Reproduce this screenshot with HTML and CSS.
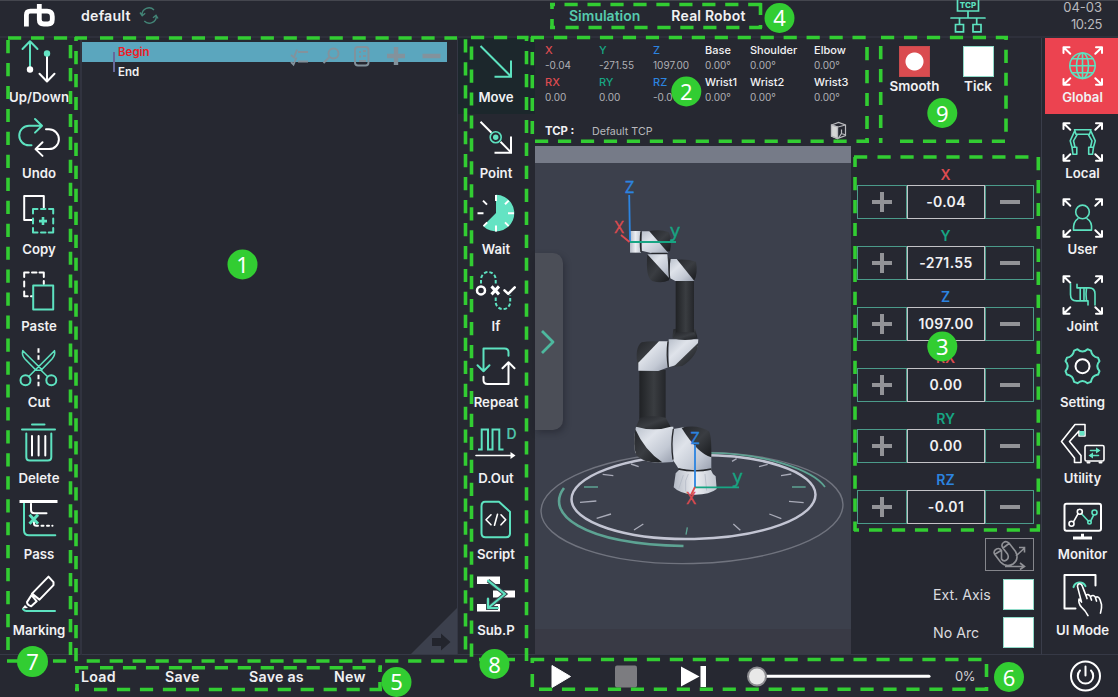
FILE: index.html
```html
<!DOCTYPE html>
<html lang="en">
<head>
<meta charset="utf-8">
<title>Robot teaching</title>
<link rel="stylesheet" href="styles.css">
</head>
<body>
<svg class="defs" aria-hidden="true">
  <defs>
    <symbol id="corners" viewBox="0 0 50 50">
      <path class="w" d="M6.5 15V9.3h6M6.8 9.5l6.5 6.2M39 9.3h6V15M44.8 9.5l-6.5 6.2M6.5 41v5.7h6M6.8 46.5l6.5-6.2M39 46.7h6V41M44.8 46.5l-6.5-6.2"/>
    </symbol>
    <linearGradient id="steel" x1="0" y1="0" x2="1" y2="1">
      <stop offset="0" stop-color="#b9c0cb"/><stop offset=".35" stop-color="#dfe3ea"/><stop offset=".7" stop-color="#c3c9d4"/><stop offset="1" stop-color="#989fae"/>
    </linearGradient>
    <linearGradient id="base" x1="0" y1="0" x2="1" y2="0">
      <stop offset="0" stop-color="#b4bac5"/><stop offset=".5" stop-color="#eceef2"/><stop offset="1" stop-color="#c0c6d0"/>
    </linearGradient>
    <linearGradient id="tube" x1="0" y1="0" x2="1" y2="0">
      <stop offset="0" stop-color="#202225"/><stop offset=".55" stop-color="#3a3d41"/><stop offset="1" stop-color="#24262a"/>
    </linearGradient>
    <linearGradient id="cap" x1="0" y1="0" x2="1" y2="1">
      <stop offset="0" stop-color="#24262a"/><stop offset=".5" stop-color="#3a3d42"/><stop offset="1" stop-color="#191b1e"/>
    </linearGradient>
  </defs>
</svg>

<div class="app">
  <header class="topbar">
    <svg class="logo" viewBox="22 2 36 28"><path d="M26.4 26.5V15q0-3.8 4-3.8H47q5.3 0 5.3 5.3v3q0 4.5-4.5 4.5h-4q-4.5 0-4.5-4.5V4"/></svg>
    <span class="project">default</span>
    <svg class="refresh" viewBox="139 5 20 20"><path d="M142 15a7 7 0 0 1 12-5M156.300 16a7 7 0 0 1-12 5M140 12.500l2.200 3.200 3-2.500M158 18.500l-2-3.200-3 2.400"/></svg>
    <nav class="modes"><span class="active">Simulation</span><span class="real">Real Robot</span></nav>
    <svg class="net" viewBox="948 0 40 34">
      <path class="t" d="M957.500-2V11H978.500V-2M968 11v7M951 18h34M959.500 18v6M976.700 18v6M955.500 24.500h8v7.300h-8zM973 24.500h8v7.300h-8z"/>
      <text x="968" y="8">TCP</text>
    </svg>
    <div class="clock"><span>04-03</span><span class="time">10:25</span></div>
  </header>

  <main class="work">
    <aside class="rail edit">
      <div class="tool"><svg viewBox="14 38 50 50"><path class="t" d="M30 68V41.500M22.500 49l7.500-7.800 7.500 7.800"/><circle class="wf" cx="30" cy="69.500" r="3.200"/><path class="w" d="M47 55v26M39.500 73.800l7.500 7.700 7.500-7.700"/><circle class="tf" cx="47" cy="53.500" r="3.200"/></svg><span class="wide">Up/Down</span></div>
      <div class="tool"><svg viewBox="14 114.200 50 50"><path class="t" d="M31.500 145.500H29a9.700 9.700 0 0 1 0-19.500h12.500M35 119.200l7 6.800-7 6.800"/><path class="w" d="M46 129.500h3a9.900 9.900 0 0 1 0 19.800H36M42.500 142.500l-7 6.800 7 6.800"/></svg><span>Undo</span></div>
      <div class="tool"><svg viewBox="14 190.400 50 50"><path class="w" d="M43.800 208v-11.700H24.200v24h9"/><path class="t" d="M33 214v-4.500h4.500M41 209.500h4.500M49 209.500h4.200v4.500M53.200 219v5M53.200 228.500v4.500h-4.500M45.500 233H41M37.500 233H33v-4.500M33 224v-5"/><path class="t thick butt" d="M43 217.500v8M39 221.500h8"/></svg><span>Copy</span></div>
      <div class="tool"><svg viewBox="14 266.600 50 50"><path class="w" d="M24.200 276.500v-4.300h4.500M32 272.200h4.500M39.500 272.200h4.300v4.300M43.800 280.500v3M24.200 281v5M24.200 291v4.800h3.500M31 295.800h2"/><path class="t" d="M33.200 285h20v24.200h-20z"/></svg><span>Paste</span></div>
      <div class="tool"><svg viewBox="14 342.800 50 50"><path class="w butt" stroke-dasharray="4.500 2.500" d="M38.500 348v12M38.500 374.500v12"/><path class="t thin" d="M22.800 350.500 42 369.500M22.800 350.500q-1.300 4.500 2.200 8.300L36 370h5l6.700 6.500M54.500 350.500 35 370l-6.500 6.500M54.500 350.500q1 4.500-2.500 8.300L41 370"/><circle class="t" cx="25.500" cy="380" r="5"/><circle class="t" cx="51.300" cy="380" r="5"/></svg><span>Cut</span></div>
      <div class="tool"><svg viewBox="14 419 50 50"><path class="t" d="M22 429.500h33M32 424.500h12.500M26.300 433.500V457q0 3.500 3.500 3.500h18q3.500 0 3.500-3.500v-23.500"/><path class="w" d="M32 436v19.500M38.600 436v19.500M45.300 436v19.500"/></svg><span>Delete</span></div>
      <div class="tool"><svg viewBox="14 495.200 50 50"><path class="t" d="M24 503v27.500q0 5 5 5h26.300"/><path class="w" d="M31 504v6q0 3.500 3.500 3.500h12M34 522v2q0 2 2.500 2h1.500M41.500 526h2M47 526h2M52.300 526h.2"/><path class="w heavy" d="M19.500 501.700h38"/><path class="t heavy" d="M29.500 515l8.500 9M38 515l-8.500 9"/></svg><span>Pass</span></div>
      <div class="tool"><svg viewBox="14 571.400 50 50"><path class="t" d="M23 609.500q1.500 2 3.500 2H55"/><path class="w" d="M32 594l16.500-17 5 5.500v3L39.500 600zM31.500 595.500l-4.500 7q0 3 4.200 4.200l5.500-5z"/><path class="wf" d="M22 608.800l3-3.500 3 3z"/></svg><span>Marking</span></div>
    </aside>

    <section class="program">
      <div class="line selected">
        <span>Begin</span>
        <svg viewBox="306 42 141 24">
          <path d="M291 55l3 2.500 3-8M298 52h10M291 62l2.500 2.500 3-7M298 61.500h10"/>
          <circle cx="333.500" cy="53.500" r="5"/><path d="M329.500 57l-6 6"/>
          <rect x="355" y="47" width="13.500" height="18.500" rx="3"/><path d="M359 52h2M363 51h3M359 56.500h2M363 56h3M359 61h7"/>
          <path class="bold" d="M387 56h18M396 47v18M422.500 56h18"/>
        </svg>
      </div>
      <div class="line"><span>End</span></div>
      <i class="branch"></i>
      <svg class="fold" viewBox="411 608 46 46"><path class="page" d="M457 608v46h-46z"/><path class="arrow" d="M432 638h9v-4.500l9.500 8.500-9.500 8.500V646h-9z"/></svg>
    </section>

    <aside class="rail commands">
      <div class="tool current"><svg viewBox="471 38 50 50"><path class="t butt" d="M480.500 46l30 30M511 60.500v16.300h-16.500"/></svg><span>Move</span></div>
      <div class="tool"><svg viewBox="471 114.200 50 50"><path class="w butt" d="M480.500 122l11 11M500.500 142l10 10M511 136.700V153h-16.500"/><circle class="t thin" cx="495.700" cy="137.500" r="5.500"/><circle class="tf" cx="495.700" cy="137.500" r="2.700"/></svg><span>Point</span></div>
      <div class="tool"><svg viewBox="471 190.400 50 50"><path class="tf" d="M496 213.500v-18.300a18.300 18.300 0 1 1-13 31.200z"/><path class="w butt" d="M496 195.500v6M508.700 201l-3.700 3.700M514 213.700h-6M508.700 226.500l-3.700-3.700M496 232v-6M483.500 226.500l3.700-3.700M477.500 213.700h6M483 201l4 4"/></svg><span>Wait</span></div>
      <div class="tool"><svg viewBox="471 266.600 50 50"><path class="t butt" stroke-dasharray="3.500 2" d="M481 283v-4a7.300 7.300 0 0 1 14.700 0v4M495.700 297v4.500a7.200 7.200 0 0 0 14.500 0V295"/><circle class="w ring" cx="481" cy="290" r="4"/><path class="w heavy" d="M491.500 286l7.500 8M499 286l-7.500 8"/><path class="w ring" d="M504.500 290l3.700 3.500 6.500-6.500"/></svg><span>If</span></div>
      <div class="tool"><svg viewBox="471 342.800 50 50"><path class="t" d="M508.500 355.500V352q0-3.700-4-3.700h-21V371M477.500 365l6 6 6-6"/><path class="w" d="M483.500 376.500v3.500q0 3.700 4 3.700h21V362M502.500 368l6-6 6 6"/></svg><span>Repeat</span></div>
      <div class="tool"><svg viewBox="471 419 50 50"><path class="t butt" d="M478 449.500h3.700V429.500h6.300v20h4.500v-20h6.800v20h4.200"/><path class="w thin" d="M476 455.500h35"/><path class="wf" d="M510.500 452l5 3.500-5 3.500z"/><text x="511.500" y="438.500">D</text></svg><span>D.Out</span></div>
      <div class="tool"><svg viewBox="471 495.200 50 50"><path class="t" d="M485 502h14l11 10v21.500q0 4-4 4h-20.500q-4 0-4-4v-27q0-4.500 3.500-4.500z"/><path class="w thin" d="M491 515l-5 5 5 5M501 515l4.700 5-4.700 5M497.500 514.500l-3 11"/></svg><span>Script</span></div>
      <div class="tool"><svg viewBox="471 571.400 50 50"><path class="wf" d="M477 577h23v7.500h-23zM493 591h22v7h-22zM477 604.500h23v7.500h-23z"/><path class="shade" d="M488 581l17 13.500-17 14M488 599v9.500h10"/><path class="t" d="M488 581l17 13.500-17 14M488 599v9.500h10"/></svg><span>Sub.P</span></div>
    </aside>

    <section class="stage">
      <div class="band">
        <div class="pose">
          <div class="grid">
            <b class="x">X</b><b class="y">Y</b><b class="z">Z</b><b>Base</b><b>Shoulder</b><b>Elbow</b>
            <span>-0.04</span><span>-271.55</span><span>1097.00</span><span>0.00°</span><span>0.00°</span><span>0.00°</span>
            <b class="x">RX</b><b class="y">RY</b><b class="z">RZ</b><b>Wrist1</b><b>Wrist2</b><b>Wrist3</b>
            <span>0.00</span><span>0.00</span><span>-0.01</span><span>0.00°</span><span>0.00°</span><span>0.00°</span>
          </div>
          <div class="tcp"><strong>TCP :</strong><span>Default TCP</span>
            <svg viewBox="830 121 18 19"><path class="side" d="M831.500 125l6 2v11.500l-6-2.500z"/><path d="M831.500 125l7-2.500 7 2.500v10.500l-8 3-6-2.500zM831.500 125l6.500 2 7.500-2M837.500 127v11.500M838.500 138l3-4.500 4 1.500M841.500 133.500v-4"/></svg>
          </div>
        </div>
        <div class="toggles">
          <div class="toggle"><i class="swatch on"></i><span>Smooth</span></div>
          <div class="toggle"><i class="swatch"></i><span>Tick</span></div>
        </div>
      </div>

      <div class="body">
        <div class="view">
          <svg class="scene" viewBox="535 146 316 508">
            <rect class="titlebar" x="535" y="146" width="316" height="17"/>
            <rect class="ground" x="535" y="629" width="316" height="25"/>
            <g transform="rotate(-1.400 692 508)"><ellipse class="outer" cx="692" cy="508" rx="151" ry="55.500"/></g>
            <g transform="rotate(-1.200 693 497)"><ellipse class="inner" cx="693.500" cy="497" rx="122" ry="42"/></g>
            <path class="sweep" d="M564 488C545 513 580 544 683.500 546"/>
            <path class="sweep fine" d="M710 453C764 453 813 470 825 487"/>
            <g transform="translate(530 330) scale(.33333)">
              <path class="ticks" d="M303 402l23 8M218 433l32 4M150 517l49-4M200 565l43-13M312 600l28-18M610 582l21 19M718 552l36 14M777 514l44 4M753 437l31-5M687 410l26-7M606 394l14-8"/>
              <path class="ticks teal" d="M162 471h42M786 471h41M472 592l-4 22"/>
              <path class="base" d="M431 472l6-42 10-10h96l6 12 8 7 3 38q-20 17-65 17-46-2-64-22z"/>
              <path class="crease" d="M460 435l-14 42M475 432l-8 20v32M525 432l5 50"/>
              <path class="steel" d="M430 297l30-5 84 85v43q-50 10-99-5l-18-28z"/>
              <path class="cap" d="M455 294q45-12 82 10 8 14 7 78-42-12-89-88z"/>
              <path class="steel" d="M318 290h112v106l-40 2q-60 0-75-33-5-40 3-75z"/>
              <path class="cap" d="M316 298q-8 52 3 78 20 24 78 21-53-35-81-99z"/>
              <path class="seam" d="M430 297q-8 45-1 92M445 417q50 11 99 0"/>
              <path class="tube" d="M328 120h79v148h-79z"/>
              <path class="cap" d="M330 263q38-8 77 0l15 27q-50 16-104 0z"/>
              <path class="cap" d="M323 108q-10-55 12-71 25-5 60-2l-10 25z"/>
              <path class="steel" d="M325 122V98l62-64h28v78l-30 11z"/>
              <path class="steel" d="M416 28h89l-2 22-53 52-34 10z"/>
              <path class="cap" d="M505 38q-2 40-48 70l-27 3z"/>
              <path class="seam" d="M414 34q-5 40 1 78"/>
              <path class="cap" d="M430-2q35-8 66 0l6 24q-37 10-75 0z"/>
            </g>
            <g transform="translate(590 170) scale(.33333)">
              <path class="tube" d="M257 328h55v165h-55z"/>
              <path class="cap" d="M257 487h55l11 18q-38 10-76 0z"/>
              <path class="cap" d="M172 253q-6 70 15 80 28 9 50-2V262z"/>
              <path class="cap" d="M175 184q35-8 62 3 10 25 3 57h-38z"/>
              <path class="cap" d="M250 270q40-5 68 5 6 35-5 56z"/>
              <path class="base" d="M120 183h33v65h-33z"/>
              <path class="steel" d="M155 184h23l57 65h-52l-28-7z"/>
              <path class="steel" d="M172 253h60l6 72z"/>
              <path class="steel" d="M240 267h20l53 66h-57l-18-10z"/>
              <path class="seam" d="M153 184q-4 30 0 62M184 250h48M240 266q-5 30-1 60"/>
            </g>
            <g class="axes">
              <path class="z" d="M629.200 195l.8 46M695 445v42"/>
              <path class="y" d="M630 242h46M695 487.300h44"/>
              <path class="x" d="M621 235l8.500 7M695 487l-4 8"/>
              <text class="z" x="629.500" y="192.500">Z</text><text class="z" x="695" y="443.500">Z</text>
              <text class="y" x="675" y="236.500">y</text><text class="y" x="737.500" y="482.500">y</text>
              <text class="x" x="619" y="232.500">X</text><text class="x" x="691" y="503.500">X</text>
            </g>
          </svg>
          <div class="drawer"><svg viewBox="540 328 16 28"><path class="t" d="M542 331l11 11-11 11"/></svg></div>
        </div>

        <div class="jog">
          <div class="axis"><b class="x">X</b><div class="stepper"><i class="plus"></i><output>-0.04</output><i class="minus"></i></div></div>
          <div class="axis"><b class="y">Y</b><div class="stepper"><i class="plus"></i><output>-271.55</output><i class="minus"></i></div></div>
          <div class="axis"><b class="z">Z</b><div class="stepper"><i class="plus"></i><output>1097.00</output><i class="minus"></i></div></div>
          <div class="axis"><b class="x">RX</b><div class="stepper"><i class="plus"></i><output>0.00</output><i class="minus"></i></div></div>
          <div class="axis"><b class="y">RY</b><div class="stepper"><i class="plus"></i><output>0.00</output><i class="minus"></i></div></div>
          <div class="axis"><b class="z">RZ</b><div class="stepper"><i class="plus"></i><output>-0.01</output><i class="minus"></i></div></div>
          <div class="magnet"><svg viewBox="990 540 40 30"><path d="M1001.500 550.500q-2-3-5-1.500-3.500 2-2 5l6 8q6 6 12.500 2 6.500-5 2.500-12.500l-6.500-8.500q-3-2.500-5.500-.5t-1 5l5 6.500q2 4-1 6t-5-1zM994.500 554.500l6.500-4M1003 548l6-4.500M1016 556l8-7.500M1019 547.500h5.500v5M1005 566.500h19M1020 563l4.500 3.500-4.500 3"/></svg></div>
          <label class="check"><span>Ext. Axis</span><i></i></label>
          <label class="check"><span>No Arc</span><i></i></label>
        </div>
      </div>
    </section>

    <aside class="rail nav">
      <div class="tool chosen"><svg viewBox="1057.500 38 50 50"><use href="#corners" x="1057.500" y="38" width="50" height="50"/><g class="t thin"><circle cx="1083" cy="65.700" r="12.700"/><ellipse cx="1083" cy="65.700" rx="6" ry="12.700"/><path d="M1083 53v25.400M1070.300 65.700h25.400M1072.500 58.700h21M1072.500 72.700h21"/></g></svg><span>Global</span></div>
      <div class="tool"><svg viewBox="1057.500 114.200 50 50"><use href="#corners" x="1057.500" y="114.200" width="50" height="50"/><path class="t thin" d="M1075 130h16.500l-1.500 4.500h-13.500zM1075 131.500l-4.300 9.500 1.800 6.500M1091.500 131.500l4.300 9.500-1.800 6.500M1077.500 135l-3.500 6 1.500 6.500M1089 135l3.500 6-1.500 6.500M1072.500 147.500h4.800v7h-3.800zM1089.200 147.500h4.800l-1 7h-3.800z"/></svg><span>Local</span></div>
      <div class="tool"><svg viewBox="1057.500 190.400 50 50"><use href="#corners" x="1057.500" y="190.400" width="50" height="50"/><circle class="t thin" cx="1083" cy="212.300" r="6.800"/><path class="t thin" d="M1078.500 219q-5 3-4.500 11.500h18q1-8.500-4.500-11.500"/></svg><span>User</span></div>
      <div class="tool"><svg viewBox="1057.500 266.600 50 50"><use href="#corners" x="1057.500" y="266.600" width="50" height="50"/><path class="t thin" d="M1071 283.500v10.500q0 6.500 6 6.500h11.500v4M1077.500 284v3.500h12q6 0 6 6v11M1080.700 287.500v13M1084.500 287.500v13M1087 287.500q-1 6.500 0 13"/></svg><span>Joint</span></div>
      <div class="tool"><svg viewBox="1057.500 342.800 50 50"><path class="t" transform="translate(1083 366)" d="M17-5Q12.500 0 17 5L15.600 8.400Q9.500 9.500 8.400 15.600L5 17Q0 12.500-5 17L-8.400 15.600Q-9.500 9.500-15.600 8.400L-17 5Q-12.500 0-17-5L-15.600-8.400Q-9.500-9.500-8.400-15.600L-5-17Q0-12.500 5-17L8.400-15.600Q9.500-9.500 15.600-8.400Z"/><circle class="w" cx="1083" cy="366" r="7"/></svg><span>Setting</span></div>
      <div class="tool"><svg viewBox="1057.500 419 50 50"><path class="w thin" d="M1075.500 424.500h10V436h-6v-5L1070 441.500l11.500 14v7H1075V458l-13-16.500z"/><path class="tf" d="M1080 431h5v4.500h-5z"/><rect class="w thin" x="1085.500" y="445.500" width="19" height="15.500" rx="1.500"/><path class="w" d="M1088 462.500h2M1100 462.500h2"/><path class="t thin" d="M1091 450.500h8M1091 455.500h8"/><path class="tf" d="M1096.500 447.500l4.500 3-4.500 3zM1093.500 452.500l-4.500 3 4.500 3z"/></svg><span>Utility</span></div>
      <div class="tool"><svg viewBox="1057.500 495.200 50 50"><rect class="w" x="1065" y="504" width="36.500" height="27" rx="2"/><path class="w heavy" d="M1073.500 538.300h19M1083 534v4"/><path class="w thin" d="M1074 522l4.500-8"/><path class="t thin" d="M1082 514l6.500 7M1091.500 520.500l2.500-5"/><circle class="w thin" cx="1072" cy="524" r="2.500"/><circle class="w thin" cx="1080.300" cy="512" r="2.500"/><circle class="t thin" cx="1090" cy="522.500" r="1.700"/><circle class="t thin" cx="1095" cy="512.700" r="2.500"/></svg><span>Monitor</span></div>
      <div class="tool"><svg viewBox="1057.500 571.400 50 50"><path class="w" d="M1096 586v-10.500h-31v33.500h11"/><path class="t" d="M1074 587.500a6.500 6.500 0 0 1 12-1"/><path class="w thin" d="M1088.500 616q-2.500-5-6.500-8.500-3.500-4-2.500-8l2.500 3-4-15.500q0-2.800 2-2.800t3 2.800l3.500 9q2-2.500 4.500 1 3-2.500 5 .7 3-1.500 4.500 2.300l1.500 5q.5 3-1 8.500M1086.500 596l1 3M1091 597.500l1 3M1096 598.500l1 3"/></svg><span>UI Mode</span></div>
    </aside>
  </main>

  <footer class="bottombar">
    <nav class="files"><span>Load</span><span>Save</span><span>Save as</span><span>New</span></nav>
    <svg class="player" viewBox="540 655 400 42">
      <path class="wf" d="M552 665.500l18.500 11-18.500 11z" stroke="#fff" stroke-linejoin="round"/>
      <rect class="stop" x="615" y="665.500" width="22" height="22" rx="2"/>
      <path class="wf" d="M681 666.500l18.500 10-18.500 10zM700.500 666h5.500v21h-5.500z"/>
      <path class="track" d="M757 676.300h172"/><circle class="halo" cx="757" cy="676.500" r="10"/><circle class="knob" cx="757" cy="676.500" r="8"/>
    </svg>
    <span class="percent">0%</span>
    <svg class="power" viewBox="1069 660 32 32"><circle class="w" cx="1085.500" cy="676" r="14.500"/><path class="w" d="M1080 670.500a7.700 7.700 0 1 0 11 0M1085.500 666.500v9"/></svg>
  </footer>

  <svg class="guides" viewBox="0 0 1118 697">
    <path d="M75 38H87M100 38H457M76 37V41M76 51V662M465.500 39.300V654M86.700 661H468"/>
    <path d="M8 38H68M8 40V650M70.500 45V655M7 661H20M30 661H68"/>
    <path d="M471 37.500H508M517 37.500H528.500M526.500 36V41M526.500 51V661M471.500 46.500V657M479 659.500H515"/>
    <path d="M531 37.500H544M554 37.500H867M532.300 37V42M532.300 52V134M867 47V130M867 138V143M535 141.300H869"/>
    <path d="M881 37.500H1008M1006 36V40M1006 49.700V132M880.700 46V130M880.700 138V143M900 141.300H1005"/>
    <path d="M854 157H868M877.500 157H1029M855 157V167M855 177V531M1038.300 157V530M854 530H859M869 530H1040"/>
    <path d="M550 4.500H555M564.500 4.500H762M552 3V9M552 19V29M760.500 3V15M760.500 25V28M550 27.500H555M565.500 27.500H762"/>
    <path d="M75 667.800H90M100 667.800H372M77 666V673M77 684V691M378.500 667H382M380 667V672M380 682V691M75 689.500H79M94 689.500H382"/>
    <path d="M531 659.500H545M555 659.500H982M532.300 658V663M532.300 674V687M986.500 664V677M986.500 687V691M539 689.300H988"/>
    <circle cx="242.500" cy="264.500" r="15"/><text x="242.500" y="272.500">1</text>
    <circle cx="686.300" cy="91.500" r="15"/><text x="686.300" y="100">2</text>
    <circle cx="942.300" cy="346.500" r="15"/><text x="942.300" y="355">3</text>
    <circle cx="779.500" cy="18" r="15"/><text x="779.500" y="26">4</text>
    <circle cx="396.500" cy="682" r="15"/><text x="396.500" y="690">5</text>
    <circle cx="1009" cy="677" r="15"/><text x="1009" y="686">6</text>
    <circle cx="32.500" cy="661.500" r="15.500"/><text x="32.500" y="670">7</text>
    <circle cx="494.500" cy="664" r="15"/><text x="494.500" y="672.500">8</text>
    <circle cx="942.300" cy="113" r="15"/><text x="942.300" y="121.500">9</text>
  </svg>
</div>
</body>
</html>
```
FILE: styles.css
```css
* { box-sizing: border-box; }
body {
  margin: 0;
  background: #262831;
  color: #f1f1f3;
  font-family: Inter, "Liberation Sans", sans-serif;
  overflow: hidden;
}
svg { display: block; flex: none; }
i { font-style: normal; }
.defs { position: absolute; width: 0; height: 0; }

.app {
  position: relative;
  width: 1118px;
  height: 697px;
  display: grid;
  grid-template-rows: 38px 616px 43px;
}

/* Shared icon strokes */
.t, .w { fill: none; stroke-width: 2; stroke-linecap: round; stroke-linejoin: round; }
.t { stroke: #5de2c0; }
.w { stroke: #fff; }
.tf { fill: #64e3c3; }
.wf { fill: #fff; }
.thin { stroke-width: 1.6; }
.ring { stroke-width: 2.5; }
.thick { stroke-width: 2.6; }
.heavy { stroke-width: 3; stroke-linecap: butt; }
.butt { stroke-linecap: butt; stroke-linejoin: miter; }
.shade { fill: none; stroke: #3b4a50; stroke-width: 4; }

/* Header */
.topbar {
  display: flex;
  align-items: flex-start;
  border-top: 1px solid #44464e;
  border-bottom: 2px solid #2e303b;
}
.logo { width: 36px; height: 28px; margin: 1px 0 0 22px; }
.logo path { fill: none; stroke: #fff; stroke-width: 4.8; }
.project { width: 58px; margin: 6px 0 0 23px; font-size: 14.2px; font-weight: 600; line-height: 18px; letter-spacing: .2px; }
.refresh { width: 20px; height: 20px; margin-top: 4px; }
.refresh path { fill: none; stroke: #438577; stroke-width: 1.4; }
.modes { display: flex; gap: 31px; margin: 6px 0 0 410px; width: 379px; font-size: 14px; font-weight: 600; line-height: 18px; }
.modes .active { color: #56cbae; }
.modes .real { letter-spacing: .2px; }
.net { width: 40px; height: 34px; margin-top: -1px; }
.net .t { stroke-width: 1.7; stroke-linejoin: miter; }
.net text { fill: #5de2c0; font-size: 8px; font-weight: 800; text-anchor: middle; }
.clock { width: 114px; display: flex; flex-direction: column; align-items: flex-end; margin-top: -2px; font-size: 13px; line-height: 17px; color: #b9b9bd; }
.clock .time { letter-spacing: -.4px; }

/* Main columns */
.work { display: grid; grid-template-columns: 82px 375px 78px 506px 77px; grid-template-rows: 617px; height: 617px; }
.rail { display: flex; flex-direction: column; border-bottom: 1px solid #363946; }
.tool { height: 76.2px; flex: none; display: flex; flex-direction: column; align-items: center; }
.tool svg { width: 50px; height: 50px; }
.tool span { margin-top: 1px; font-size: 13.2px; font-weight: 600; line-height: 16px; white-space: nowrap; }
.edit { border-right: 2px solid #31333f; padding-right: 2px; }
.tool .wide { letter-spacing: .1px; }
.commands { border-left: 1px solid #343744; }
.commands .tool { padding-right: 1px; }
.commands .current { background: #1c272c; }
.commands text { fill: #4fc4a8; font-size: 14px; font-weight: 600; text-anchor: middle; }
.nav { border-left: 1px solid #3a3d4a; padding-left: 3px; }
.nav .tool { padding-left: 2px; }
.nav .tool svg { margin-right: 1.5px; }
.nav .chosen { background: #ec4350; }

/* Program tree */
.program { position: relative; padding-top: 4px; border-bottom: 1px solid #363946; }
.line { display: flex; width: 365px; height: 20px; padding-left: 36px; font-size: 11.5px; font-weight: 600; line-height: 21px; }
.selected { background: #5ba6be; color: #ed1c24; }
.selected svg { width: 141px; height: 24px; margin-left: auto; overflow: visible; }
.selected path, .selected rect, .selected circle { fill: none; stroke: #83929c; stroke-width: 1.9; }
.selected .bold { stroke-width: 4.4; }
.branch { position: absolute; left: 31px; top: 14px; width: 2px; height: 20px; background: #66689b; }
.fold { position: absolute; right: 0; bottom: 0; width: 46px; height: 46px; }
.page { fill: #3c404d; }
.arrow { fill: #23252d; }

/* Pose readout */
.stage { display: flex; flex-direction: column; border-bottom: 1px solid #363946; }
.band { display: flex; height: 108px; flex: none; }
.pose { width: 333px; padding: 5px 0 0 10px; }
.grid { display: grid; grid-template-columns: 54px 54px 52px 45px 64px 50px; grid-template-rows: 15px 17px 15px 16px; font-size: 11px; line-height: 15px; }
.grid b { font-weight: 500; }
.grid span { color: #b0b0b5; font-size: 10px; line-height: 15px; }
.x { color: #dd4b50; stroke: #dd4b50; }
.y { color: #17a583; stroke: #17a583; }
.z { color: #2c84e0; stroke: #2c84e0; }
.tcp { display: flex; align-items: center; height: 20px; margin-top: 15px; font-size: 11.3px; }
.tcp strong { width: 47px; }
.tcp span { width: 238px; color: #b9b9bd; font-size: 10.700px; }
.tcp svg { width: 18px; height: 19px; margin-top: -1px; }
.tcp path { fill: none; stroke: #b9b9bd; stroke-width: 1.2; }
.tcp .side { fill: #d7d7d7; }
.toggles { display: flex; padding: 8px 0 0 10px; }
.toggle { display: flex; flex-direction: column; align-items: center; width: 73px; font-size: 13.4px; font-weight: 600; line-height: 16px; }
.toggle + .toggle { width: 54px; }
.swatch { width: 31px; height: 31px; margin-bottom: 1px; border: 1px solid #8fdac8; background: #fff; }
.swatch.on { border-color: #c94a4d; background: radial-gradient(circle, #fff 8.500px, #da4c50 9.500px); }

/* 3D view */
.body { display: flex; flex: 1; min-height: 0; }
.view { position: relative; width: 316px; background: #3c404c; }
.scene { width: 316px; height: 508px; }
.titlebar { fill: #767b88; }
.ground { fill: #393a45; }
.outer { fill: none; stroke: #70737e; stroke-width: 1.4; }
.inner { fill: none; stroke: #c3c5d3; stroke-width: 2.5; }
.sweep { fill: none; stroke: #5da393; stroke-width: 2.6; }
.fine { stroke-width: 1.7; }
.ticks { fill: none; stroke: #a9abb8; stroke-width: 4; }
.ticks.teal { stroke: #5da393; }
.steel { fill: url(#steel); }
.base { fill: url(#base); }
.cap { fill: url(#cap); }
.tube { fill: url(#tube); }
.seam { fill: none; stroke: #26282c; stroke-width: 4; }
.crease { fill: none; stroke: #b4bac6; stroke-width: 2.5; }
.axes path { fill: none; stroke-width: 1.8; }
.axes text { font-family: "Open Sans", sans-serif; font-size: 16px; text-anchor: middle; stroke-width: .4; }
.axes text.y { font-size: 19px; fill: #17a583; }
.axes text.x { fill: #dd4b50; }
.axes text.z { fill: #2c84e0; }
.drawer {
  position: absolute;
  left: 0;
  top: 107px;
  width: 28px;
  height: 177px;
  display: flex;
  align-items: center;
  padding-left: 5px;
  border-radius: 0 10px 10px 0;
  background: #4b4e57;
  box-shadow: 2px 3px 6px rgba(20, 20, 30, .35);
}
.drawer svg { width: 16px; height: 28px; }
.drawer .t { stroke: #4db89e; stroke-linecap: butt; stroke-width: 2.8; }

/* Jog controls */
.jog { width: 190px; padding: 20px 7px 0 6px; display: flex; flex-direction: column; }
.axis { height: 61.100px; flex: none; text-align: center; }
.axis b { display: block; height: 18.500px; font-size: 14px; font-weight: 600; line-height: 17px; }
.stepper { display: grid; grid-template-columns: 50px 78px 49px; height: 33.500px; }
.stepper i { border: 1px solid #4b9b8a; background: linear-gradient(#929397, #929397) center / 20px 4px no-repeat; }
.stepper .plus { background: linear-gradient(#929397, #929397) center / 20px 4px no-repeat, linear-gradient(#929397, #929397) center / 4px 20px no-repeat; }
.stepper output { border: 1px solid #c3c3c7; font-size: 14px; font-weight: 600; line-height: 32px; letter-spacing: .35px; }
.magnet { align-self: flex-end; flex: none; width: 49px; height: 33px; margin: 5px 0 8px; padding: 1px 4px; border: 1px solid #85868c; }
.magnet svg { width: 40px; height: 30px; }
.magnet path { fill: none; stroke: #909196; stroke-width: 1.6; }
.check { display: flex; flex: none; align-items: center; justify-content: space-between; height: 31px; margin-bottom: 7.500px; padding-left: 76px; font-size: 14.2px; color: #dadade; white-space: nowrap; }
.check:last-child { margin-bottom: 0; }
.check i { width: 31px; height: 31px; border: 1px solid #8fdac8; background: #fff; }

/* Footer */
.bottombar { display: flex; align-items: center; }
.files { display: grid; grid-template-columns: 84px 84px 85px 206px; padding: 1px 0 0 81px; width: 540px; font-size: 14.2px; font-weight: 600; letter-spacing: .25px; }
.player { width: 400px; height: 42px; }
.stop { fill: #7c7c80; }
.track { stroke: #fff; stroke-width: 3; stroke-linecap: round; }
.knob { fill: #e8e8e8; }
.halo { fill: #8d8d91; }
.percent { width: 129px; padding-left: 15px; font-size: 13px; color: #d4d4d8; letter-spacing: -.4px; }
.power { width: 32px; height: 32px; }

/* Numbered callouts */
.guides { position: absolute; inset: 0; width: 1118px; height: 697px; pointer-events: none; }
.guides path { fill: none; stroke: #32cd32; stroke-width: 3.600; stroke-dasharray: 13.200 9.760; }
.guides circle { fill: #32cd32; }
.guides text { fill: #fff; font-family: "Noto Sans", sans-serif; font-size: 22px; text-anchor: middle; }
```
